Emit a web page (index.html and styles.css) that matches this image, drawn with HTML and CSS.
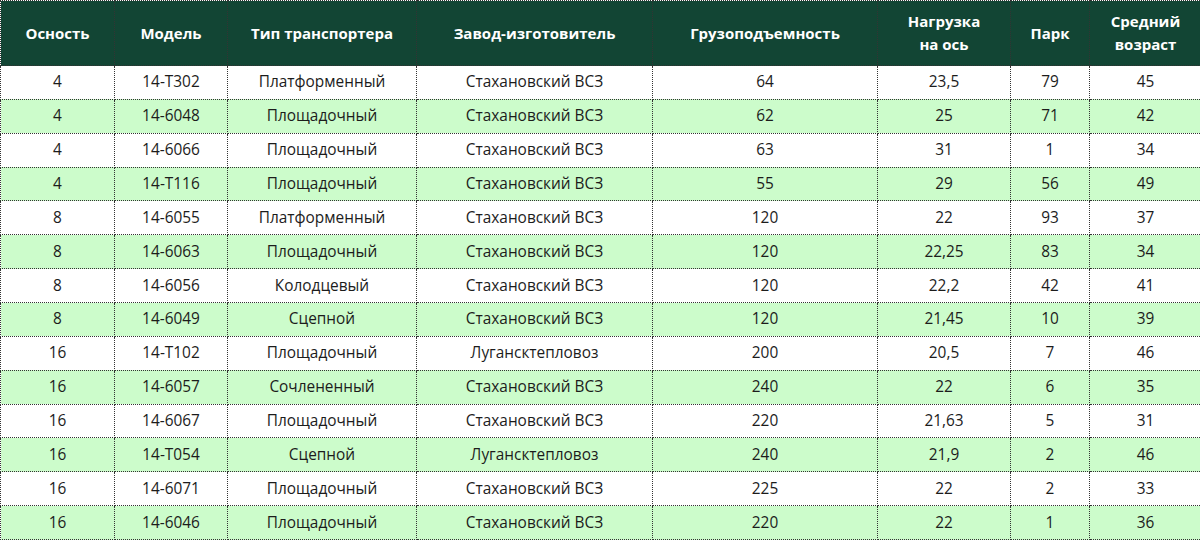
FILE: index.html
```html
<!DOCTYPE html>
<html lang="ru">
<head>
<meta charset="utf-8">
<link rel="stylesheet" href="styles.css">
</head>
<body>
<table class="data">
<colgroup>
<col class="c1"><col class="c2"><col class="c3"><col class="c4"><col class="c5"><col class="c6"><col class="c7"><col class="c8">
</colgroup>
<thead>
<tr><th>Осность</th><th>Модель</th><th>Тип транспортера</th><th>Завод-изготовитель</th><th>Грузоподъемность</th><th>Нагрузка<br>на ось</th><th>Парк</th><th>Средний<br>возраст</th></tr>
</thead>
<tbody>
<tr><td>4</td><td>14-Т302</td><td>Платформенный</td><td>Стахановский ВСЗ</td><td>64</td><td>23,5</td><td>79</td><td>45</td></tr>
<tr><td>4</td><td>14-6048</td><td>Площадочный</td><td>Стахановский ВСЗ</td><td>62</td><td>25</td><td>71</td><td>42</td></tr>
<tr><td>4</td><td>14-6066</td><td>Площадочный</td><td>Стахановский ВСЗ</td><td>63</td><td>31</td><td>1</td><td>34</td></tr>
<tr><td>4</td><td>14-Т116</td><td>Площадочный</td><td>Стахановский ВСЗ</td><td>55</td><td>29</td><td>56</td><td>49</td></tr>
<tr><td>8</td><td>14-6055</td><td>Платформенный</td><td>Стахановский ВСЗ</td><td>120</td><td>22</td><td>93</td><td>37</td></tr>
<tr><td>8</td><td>14-6063</td><td>Площадочный</td><td>Стахановский ВСЗ</td><td>120</td><td>22,25</td><td>83</td><td>34</td></tr>
<tr><td>8</td><td>14-6056</td><td>Колодцевый</td><td>Стахановский ВСЗ</td><td>120</td><td>22,2</td><td>42</td><td>41</td></tr>
<tr><td>8</td><td>14-6049</td><td>Сцепной</td><td>Стахановский ВСЗ</td><td>120</td><td>21,45</td><td>10</td><td>39</td></tr>
<tr><td>16</td><td>14-Т102</td><td>Площадочный</td><td>Лугансктепловоз</td><td>200</td><td>20,5</td><td>7</td><td>46</td></tr>
<tr><td>16</td><td>14-6057</td><td>Сочлененный</td><td>Стахановский ВСЗ</td><td>240</td><td>22</td><td>6</td><td>35</td></tr>
<tr><td>16</td><td>14-6067</td><td>Площадочный</td><td>Стахановский ВСЗ</td><td>220</td><td>21,63</td><td>5</td><td>31</td></tr>
<tr><td>16</td><td>14-Т054</td><td>Сцепной</td><td>Лугансктепловоз</td><td>240</td><td>21,9</td><td>2</td><td>46</td></tr>
<tr><td>16</td><td>14-6071</td><td>Площадочный</td><td>Стахановский ВСЗ</td><td>225</td><td>22</td><td>2</td><td>33</td></tr>
<tr><td>16</td><td>14-6046</td><td>Площадочный</td><td>Стахановский ВСЗ</td><td>220</td><td>22</td><td>1</td><td>36</td></tr>
</tbody>
</table>
</body>
</html>
```
FILE: styles.css
```css
html, body {
  margin: 0;
  padding: 0;
  background: #ffffff;
}
body {
  font-family: "Open Sans", "Noto Sans", sans-serif;
  color: #1c1c1c;
}
.data {
  width: 1201px;
  border-collapse: collapse;
  table-layout: fixed;
  font-size: 15.4px;
}
.c1 { width: 114px; }
.c2 { width: 113px; }
.c3 { width: 189px; }
.c4 { width: 236px; }
.c5 { width: 225px; }
.c6 { width: 133px; }
.c7 { width: 79px; }
.c8 { width: 112px; }
.data th, .data td {
  border: 1px dotted #333333;
  text-align: center;
  padding: 0 4px;
  white-space: nowrap;
}
.data th {
  background: #124534;
  color: #ffffff;
  font-weight: 700;
  font-size: 15px;
  height: 64px;
  line-height: 23px;
}
.data td {
  height: 32.86px;
  line-height: 20px;
}
.data tbody tr:nth-child(even) td {
  background: #ccfccb;
}
```
